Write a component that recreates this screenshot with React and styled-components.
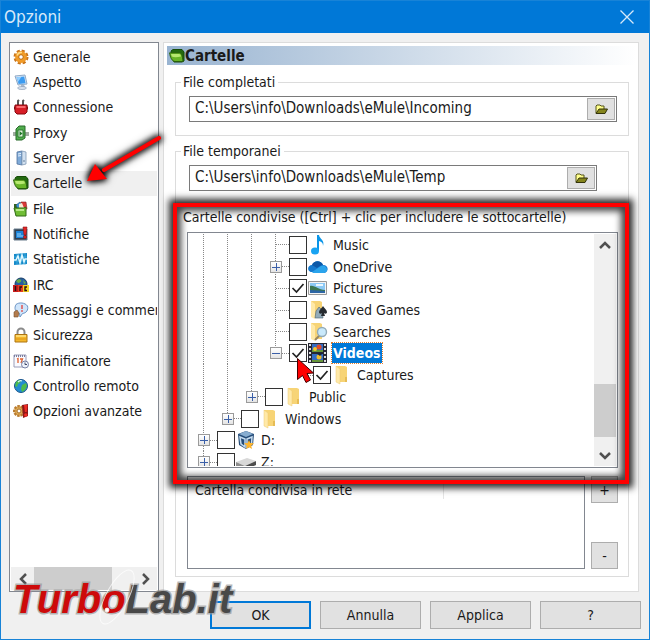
import React, { useState } from 'react';
import styled, { createGlobalStyle, css } from 'styled-components';

const GlobalStyle = createGlobalStyle`
*{
  box-sizing: border-box;
}
body{
  margin: 0;
}
body, button, input{
  font-family: 'DejaVu Sans Condensed', 'Noto Sans', sans-serif;
  font-size: 14px;
  color: #1a1a1a;
}
`;

const Window = styled.div`
  position: relative;
  display: flex;
  flex-direction: column;
  min-height: 100vh;
  background: #f0f0f0;
  border: 1px solid #1883d7;
  overflow: hidden;
`;
const TitleBar = styled.header`
  display: flex;
  align-items: center;
  justify-content: space-between;
  height: 32px;
  padding: 0 8px 0 3px;
  background: #0078d7;
  h1{
    margin: 0;
    font-size: 17px;
    font-weight: 400;
    color: #d6e9f9;
  }
`;
const CloseButton = styled.button`
  display: flex;
  padding: 7px;
  border: none;
  background: none;
`;
const Content = styled.div`
  display: flex;
  flex: 1;
  gap: 4px;
  padding: 9px 10px 9px 8px;
`;
const Sidebar = styled.nav`
  display: flex;
  flex-direction: column;
  flex: 0 0 150px;
  min-width: 0;
  padding: 1px;
  background: white;
  border: 1px solid #828790;
`;
const SectionList = styled.ul`
  display: grid;
  grid-auto-rows: 1fr;
  height: 380px;
  margin: 0;
  padding: 0;
  list-style: none;
  li{
    display: flex;
    min-width: 0;
    overflow: hidden;
  }
`;
const SectionButton = styled.button`
  display: flex;
  flex: 1 0 auto;
  align-items: center;
  gap: 4px;
  padding: 0 0 0 2px;
  border: none;
  white-space: nowrap;
  background: ${props => (props.$active ? '#f0f0f0' : 'none')};
`;
const SmallIcon = styled.svg`
  flex: none;
  width: 16px;
  height: 16px;
`;

const ScrollTrack = styled.div`
  display: flex;
  flex: none;
  background: #f0f0f0;
  ${props => (props.$vertical ? css`
    flex-direction: column;
    width: 22px;
  ` : css`
    height: 23px;
    margin-top: auto;
  `)}
`;
const ScrollButton = styled.button`
  display: flex;
  flex: 0 0 23px;
  align-items: center;
  justify-content: center;
  padding: 0;
  border: none;
  background: none;
`;
const Thumb = styled.div`
  background: #cdcdcd;
  flex: 0 0 ${props => props.$length}px;
`;
const Spacer = styled.div`
  flex: ${props => (props.$length ? `0 0 ${props.$length}px` : 1)};
`;

const Panel = styled.main`
  flex: 1;
  min-width: 0;
  padding: 3px 2px 14px 3px;
  background: white;
  border: 1px solid #dcdcdc;
`;
const PanelTitle = styled.h2`
  display: flex;
  align-items: center;
  height: 19px;
  margin: 0 0 8px;
  padding-left: 2px;
  font-size: 15px;
  font-weight: 700;
  background: linear-gradient(to right, #99b4d1, #ffffff);
`;
const Groups = styled.div`
  display: flex;
  flex-direction: column;
  padding: 0 7px 0 8px;
`;
const Group = styled.fieldset`
  min-width: 0;
  margin: 0 0 ${props => props.$after || 0}px;
  padding: 5px 11px 13px 13px;
  border: 1px solid #dcdcdc;
  legend{
    height: 18px;
    margin-left: -8px;
    padding: 0 3px 0 2px;
    line-height: 18px;
    white-space: nowrap;
  }
`;
const SharedWrap = styled.div`
  position: relative;
`;
const SharedGroup = styled(Group)`
  padding: 6px 10px 7px 11px;
  border-top-color: transparent;
  legend{
    margin-left: -6px;
  }
`;
const PathField = styled.div`
  display: flex;
  height: 26px;
  margin-right: ${props => props.$inset || 0}px;
  padding: 1px;
  border: 1px solid #7a7a7a;
  input{
    flex: 1;
    min-width: 0;
    padding: 0 0 2px 4px;
    border: none;
    outline: none;
    font-size: 15px;
    background: none;
  }
`;
const PushButton = styled.button`
  display: flex;
  flex: none;
  align-items: center;
  justify-content: center;
  width: ${props => props.$width || 28}px;
  height: ${props => props.$height || 22}px;
  padding: 0;
  background: #e1e1e1;
  border: ${props => (props.$primary ? '2px solid #0078d7' : '1px solid #adadad')};
`;

const Tree = styled.div`
  display: flex;
  height: 236px;
  padding: 1px;
  border: 1px solid #828790;
`;
const TreeRows = styled.ul`
  display: grid;
  flex: 1;
  grid-template-rows: repeat(11, 1fr);
  height: 239px;
  margin: 0;
  padding: 0 0 0 4px;
  list-style: none;
`;
const TreeClip = styled.div`
  display: flex;
  flex: 1;
  align-items: flex-start;
  overflow: hidden;
`;
const TreeRow = styled.li`
  display: flex;
  align-items: center;
  min-height: 0;
`;
const Guide = styled.span`
  display: grid;
  align-self: stretch;
  flex: none;
  width: 24px;
  background-image:
    ${props => (props.$line ? 'repeating-linear-gradient(to bottom, #888 0 1px, transparent 1px 2px)' : 'none')},
    ${props => (props.$branch ? 'repeating-linear-gradient(to right, #888 0 1px, transparent 1px 2px)' : 'none')};
  background-repeat: no-repeat;
  background-position: 10px 0, 11px 50%;
  background-size: 1px ${props => (props.$line === 'half' ? '50%' : '100%')}, 13px 1px;
`;
const Expander = styled.button`
  display: flex;
  align-self: center;
  width: 12px;
  height: 12px;
  margin-left: 5px;
  padding: 0;
  background: linear-gradient(#fff, #e4e4e4);
  border: 1px solid #9a9a9a;
`;
const TickBox = styled.span`
  display: grid;
  flex: none;
  width: 18px;
  height: 18px;
  input, svg{
    grid-area: 1 / 1;
    width: 18px;
    height: 18px;
    margin: 0;
  }
  input{
    appearance: none;
    background: white;
    border: 1px solid #333;
  }
  svg{
    visibility: hidden;
    pointer-events: none;
  }
  input:checked + svg{
    visibility: visible;
  }
`;
const RowLabel = styled.label`
  display: flex;
  align-items: center;
  gap: 4px;
  padding-left: 1px;
  line-height: 20px;
  white-space: nowrap;
  svg{
    flex: none;
    width: 20px;
    height: 20px;
  }
  span{
    padding: 0 1px;
    ${props => props.$selected && css`
      color: white;
      font-weight: 700;
      background: #0078d7;
      outline: 1px dotted #e08030;
    `}
  }
`;

const NetworkShares = styled.div`
  display: flex;
  gap: 6px;
  height: 93px;
  margin-top: 8px;
`;
const ShareTable = styled.div`
  flex: 1;
  padding-top: 5px;
  border: 1px solid #828790;
  table{
    width: 100%;
    border-collapse: collapse;
    table-layout: fixed;
  }
  th{
    height: 17px;
    padding: 0 7px;
    font-weight: 400;
    line-height: 17px;
    text-align: left;
  }
  th:first-child{
    width: 255px;
    border-right: 1px solid #e5e5e5;
  }
`;
const ShareButtons = styled.div`
  display: flex;
  flex-direction: column;
  justify-content: space-between;
`;
const Footer = styled.footer`
  display: flex;
  justify-content: flex-end;
  gap: 9px;
  padding: 0 8px 10px;
`;

const Highlight = styled.div`
  position: absolute;
  top: -5px;
  right: 0;
  left: -2px;
  height: 281px;
  border: 4px solid #ff0000;
  box-shadow: 0 0 7px 4px rgba(0, 0, 0, .85), inset 0 0 7px 4px rgba(0, 0, 0, .75);
  pointer-events: none;
`;
const Arrow = styled.svg`
  position: absolute;
  top: 119px;
  left: 69px;
  width: 110px;
  height: 90px;
  pointer-events: none;
  filter: drop-shadow(0 0 3px #000) drop-shadow(0 0 3px #000);
`;
const Cursor = styled.svg`
  position: absolute;
  top: 356px;
  left: 295px;
  width: 20px;
  height: 28px;
  pointer-events: none;
`;
const Watermark = styled.div`
  position: absolute;
  bottom: 15px;
  left: 12px;
  font-family: 'Liberation Sans', sans-serif;
  font-size: 40px;
  font-style: italic;
  font-weight: 700;
  line-height: 50px;
  color: #484848;
  paint-order: stroke fill;
  -webkit-text-stroke: 3px rgba(150, 150, 150, .7);
  pointer-events: none;
  span{
    color: #cd0a0a;
  }
`;
const Swirl = styled.svg`
  position: absolute;
  bottom: 10px;
  left: 84px;
  width: 60px;
  height: 62px;
  pointer-events: none;
`;

const icons = {
  gear: (
    <>
      <circle cx="8" cy="8" r="6" fill="none" stroke="#c9741a" strokeWidth="3" strokeDasharray="2.9 1.8" />
      <circle cx="8" cy="8" r="4.6" fill="#f7a62c" stroke="#f09a28" strokeWidth="2.600" />
      <path d="M4 6.5A4.5 4.5 0 0 1 9 3.6" fill="none" stroke="#ffdc86" strokeWidth="1.3" />
      <circle cx="8" cy="8" r="2.3" fill="#fff" stroke="#b8650c" />
    </>
  ),
  monitor: (
    <>
      <path d="M2 2l10-1 2 9-9 1z" fill="#dce8f5" stroke="#8fa9c6" />
      <path d="M3.5 3.2l7.7-.8 1.4 6.8-7 .8z" fill="#3c9bf0" />
      <path d="M3.5 3.2l5-.5-3.4 5z" fill="#95d0ff" />
      <path d="M8 11l3-.5 1 3H8z" fill="#a9b9cc" />
      <ellipse cx="9" cy="14" rx="4.4" ry="1.5" fill="#d9e2ee" stroke="#8b9db4" strokeWidth=".7" />
    </>
  ),
  plug: (
    <>
      <path d="M5 6V2l1-1M10 6V2l1-1" fill="none" stroke="#555" strokeWidth="2" />
      <path d="M1 9h14" stroke="#7d1116" strokeWidth="3" />
      <path d="M2 6h12v7l-2 2H4l-2-2z" fill="#d71e27" stroke="#86090f" />
      <path d="M3.5 8h9" stroke="#ff7c80" strokeWidth="1.6" />
    </>
  ),
  proxy: (
    <>
      <path d="M0 8h16M0 10h16" stroke="#465a48" strokeWidth="1.2" />
      <path d="M3 4l3-3h6v12l-3 2H3z" fill="#51ad4d" stroke="#286a2b" />
      <path d="M5 5h5v7H5z" fill="#e3f5df" stroke="#2c7731" />
      <path d="M6.5 6v5L9.5 8.500z" fill="#20762a" />
    </>
  ),
  server: (
    <>
      <path d="M4 2l5-1v14l-5-1z" fill="#7faad8" stroke="#50719d" strokeWidth=".8" />
      <path d="M9 1l4 1v12l-4 1z" fill="#d3e1f0" stroke="#8199b5" strokeWidth=".8" />
      <path d="M5 4l3-.5M5 6l3-.4" stroke="#e9f4ff" />
      <circle cx="11" cy="11" r=".8" fill="#54718e" />
    </>
  ),
  folder: (
    <>
      <path d="M2 3l2-1.500h9L15 4v9l-2 1H5z" fill="#236a10" stroke="#164c08" />
      <path d="M.6 4.800h9.800c2 .2 3 2 3.600 8.700H6C3 13.300 1.200 9.500.6 4.800z" fill="#68b526" stroke="#285f0c" />
      <path d="M2 6h8c1.200.2 1.800 1.200 2 2.500C8 9.500 4.500 9.500 2.800 8.500z" fill="#b7e870" />
    </>
  ),
  files: (
    <>
      <path d="M1 3h5l1 2v4H1z" fill="#356420" />
      <path d="M3 4l4-3 3 5-5 3z" fill="#3e91d3" stroke="#2c5270" strokeWidth=".6" />
      <path d="M8 1h5l1 7H9z" fill="#da3838" stroke="#842222" strokeWidth=".6" />
      <path d="M6 3l3-1 2 5H6z" fill="#f7ead2" />
      <path d="M1 7h10l2-1v9H3z" fill="#70bd35" stroke="#306a16" />
      <path d="M3 9h8" stroke="#b7e98a" strokeWidth="2" />
    </>
  ),
  notice: (
    <>
      <path d="M1 3h13v11H1z" fill="#2f4053" stroke="#6b7d8c" />
      <path d="M3 5h9v7H3z" fill="#1c83d8" />
      <path d="M4 8h4M4 10h6" stroke="#9ed8ff" />
      <path d="M10 1h4l-1 8h-2z" fill="#e42626" stroke="#861212" strokeWidth=".6" />
      <circle cx="12" cy="11" r="1.5" fill="#e42626" stroke="#861212" strokeWidth=".6" />
    </>
  ),
  stats: (
    <>
      <path d="M1 3l13-1v11L1 14z" fill="#1689c9" />
      <path d="M4 3v11M8 2v12M12 2v12M1 6h13M1 10h13" stroke="#55bce8" strokeWidth=".6" />
      <path d="M1 9h2l2-4 2 7 2-8 2 7 1-3h2" fill="none" stroke="#e1f9ff" strokeWidth="1.5" />
    </>
  ),
  irc: (
    <>
      <circle cx="8" cy="7" r="6" fill="#265f9f" stroke="#173c66" />
      <path d="M3 4c2-2 4-2 5-1s-1 3-3 3zM10 3l3 3-2 1z" fill="#69ad48" />
      <path d="M0 8h5v7H0z" fill="#c81c1c" />
      <path d="M5 8h5v7H5z" fill="#e43c22" />
      <path d="M10 8h6v7h-6z" fill="#f4d422" />
      <path d="M2.500 9v5M7 14v-4h2M14 10h-2v3.500h2" fill="none" stroke="#2b1010" strokeWidth="1.400" />
    </>
  ),
  messages: (
    <>
      <path d="M3 2.500C6 0 12 .5 14.500 4c1 4-1 7-5 7.500L7 15l-.5-3.500C2 10 1 6 3 2.500z" fill="#cfe5fb" stroke="#6b94c5" />
      <path d="M9 3v4" stroke="#e05c5c" strokeWidth="1.600" />
      <circle cx="9" cy="9" r="1" fill="#e05c5c" />
      <path d="M1 10l3-2 2 3-1 4H1z" fill="#b27b4d" stroke="#76502f" strokeWidth=".6" />
    </>
  ),
  lock: (
    <>
      <path d="M4.500 8V5a3.500 3.500 0 0 1 7 0v3" fill="none" stroke="#8b8b8b" strokeWidth="2" />
      <path d="M2 7.500h12V15H2z" fill="#f5b82a" stroke="#ad7412" />
      <path d="M3 9h10" stroke="#ffe386" strokeWidth="1.500" />
      <path d="M3 12h10" stroke="#dd951a" />
    </>
  ),
  calendar: (
    <>
      <path d="M1 2h12v12H1z" fill="#fafaff" stroke="#9a9db8" />
      <path d="M1 3h12" stroke="#7c7f9e" strokeWidth="2" strokeDasharray="1 1" />
      <path d="M4 6l1-.5V10M7 6h2.500L8 10" fill="none" stroke="#e0602c" strokeWidth="1.300" />
      <circle cx="12" cy="11.500" r="3.500" fill="#edf2fc" stroke="#7780a4" />
      <path d="M12 9.500v2h2" fill="none" stroke="#404766" />
    </>
  ),
  globe: (
    <>
      <circle cx="8" cy="8" r="6.500" fill="#238dd0" stroke="#17538b" />
      <path d="M3 4c2-2 4-2.500 5-1.500L7 5 5 6 4 9 2 8zM9 7l4-2 1 3-2 4-3 2-1-3z" fill="#4dbc4b" />
      <path d="M5 4c1-1 3-1.500 4-1" fill="none" stroke="#d7f5ff" strokeWidth="1.300" />
    </>
  ),
  advanced: (
    <>
      <circle cx="6" cy="8" r="4.800" fill="#dfaa55" stroke="#b97c30" strokeWidth="2.400" strokeDasharray="2.400 1" />
      <circle cx="6" cy="8" r="2" fill="#fff" stroke="#a56c22" />
      <path d="M9 2l6-1v12l-5 2z" fill="#8c1717" />
      <path d="M11 2h3.500l-.8 7h-1.800z" fill="#f02b24" />
      <circle cx="12.800" cy="12" r="1.700" fill="#f02b24" />
    </>
  ),
};

const treeIcons = {
  music: (
    <>
      <path d="M9 0h2c.5 4 6 5 4 11 0-3-1-4-4-5v10H9z" fill="#0a95e8" />
      <ellipse cx="7" cy="16" rx="4" ry="3.500" fill="#18a3f2" />
    </>
  ),
  cloud: (
    <>
      <path d="M6 15C-2 16-1 8 4 8c2-5 9-5 11 0 6 0 6 7 1 8z" fill="#1479cf" />
      <path d="M4 8c2-5 9-5 11 0-3 0-4 2-6 3z" fill="#0c59a8" />
      <path d="M4 15l9-6c5-3 9 6 3 7H5z" fill="#2ba4ec" />
    </>
  ),
  picture: (
    <>
      <path d="M.5 3.500h18v13H.5z" fill="#f4f4f4" stroke="#999" />
      <path d="M2 5h15v10H2z" fill="#8cc9f5" />
      <path d="M2 8c5-1 8 4 15 4v3H2z" fill="#3c7650" />
      <path d="M2 12c6 0 10 1 15 1v2H2z" fill="#2d66a5" />
      <path d="M8 7h7" stroke="#eaf7ff" strokeWidth="2" />
    </>
  ),
  folder: (
    <>
      <path d="M4 1h9l2 1v15H4z" fill="#f7d476" />
      <path d="M4 1l4 3v15l-4-2z" fill="#ffe9a8" stroke="#edca70" strokeWidth=".5" />
      <path d="M13 12h2v5h-2z" fill="#e6bc55" />
    </>
  ),
  games: (
    <>
      <path d="M3 1h9l2 1v15H3z" fill="#f7d476" />
      <path d="M3 1l4 3v15l-4-2z" fill="#ffe9a8" />
      <path d="M7 18l1-7 3-4 3 3 1 8z" fill="#92abb9" stroke="#4c626e" strokeWidth=".6" />
      <path d="M15 6c1 2 4 4 4 6s-2 2-3 1l1 3h-4l1-3c-1 1-3 1-3-1s3-4 4-6z" fill="#272b30" />
    </>
  ),
  search: (
    <>
      <path d="M3 1h9l2 1v15H3z" fill="#f7d476" />
      <path d="M3 1l4 3v15l-4-2z" fill="#ffe9a8" />
      <path d="M12 13l-5 5" stroke="#9a8762" strokeWidth="2" />
      <circle cx="14" cy="10" r="4.500" fill="#c9e9fb" stroke="#93abb8" strokeWidth="1.400" />
    </>
  ),
  film: (
    <>
      <path d="M0 0h19v20H0z" fill="#272732" />
      <path d="M4 1h11v8H4zM4 11h11v8H4z" fill="#336bc3" />
      <path d="M2 1v19M17 1v19" stroke="#ddd" strokeWidth="2" strokeDasharray="2 2" />
      <path d="M4 7h11v2H4zM4 17h11v2H4z" fill="#66953a" />
      <circle cx="11" cy="4" r="2.500" fill="#e24a26" />
      <circle cx="7" cy="6" r="2" fill="#f6c52b" />
      <circle cx="11" cy="14" r="2.500" fill="#f0bd2d" />
      <path d="M8 10h7l-3 3z" fill="#1a2435" />
    </>
  ),
  box: (
    <>
      <path d="M2 4l8-3 8 3-1 11-7 4-7-4z" fill="#254c78" />
      <path d="M3 4l7-3 7 3-7 3z" fill="#87add0" />
      <path d="M4 7l5 2v8l-4-3zM11 9l5-2-.5 7-4.500 3z" fill="none" stroke="#c5dcf0" strokeWidth="1.500" />
      <path d="M13 10l1.300 3 3.700.3-2.800 2.400.9 3.300-3.100-1.800L10 19l.8-3.300L8 13.300l3.700-.3z" fill="#ffb52b" />
    </>
  ),
  drive: (
    <>
      <path d="M0 10l11-4 9 3-11 5z" fill="#d8d8d8" />
      <path d="M0 10l9 4v4l-9-4z" fill="#8d8d8d" />
      <path d="M9 14l11-5v4L9 18z" fill="#4d4d4d" />
    </>
  ),
};

const sections = [
  { name: 'Generale', icon: 'gear' },
  { name: 'Aspetto', icon: 'monitor' },
  { name: 'Connessione', icon: 'plug' },
  { name: 'Proxy', icon: 'proxy' },
  { name: 'Server', icon: 'server' },
  { name: 'Cartelle', icon: 'folder' },
  { name: 'File', icon: 'files' },
  { name: 'Notifiche', icon: 'notice' },
  { name: 'Statistiche', icon: 'stats' },
  { name: 'IRC', icon: 'irc' },
  { name: 'Messaggi e commenti', icon: 'messages' },
  { name: 'Sicurezza', icon: 'lock' },
  { name: 'Pianificatore', icon: 'calendar' },
  { name: 'Controllo remoto', icon: 'globe' },
  { name: 'Opzioni avanzate', icon: 'advanced' },
];

// guides: one entry per level, the last one belongs to the row itself
const folders = [
  { name: 'Music', icon: 'music', guides: ['full', 'full', 'full', 'full'] },
  { name: 'OneDrive', icon: 'cloud', guides: ['full', 'full', 'full', 'full'], expander: 'plus' },
  { name: 'Pictures', icon: 'picture', guides: ['full', 'full', 'full', 'full'], shared: true },
  { name: 'Saved Games', icon: 'games', guides: ['full', 'full', 'full', 'full'] },
  { name: 'Searches', icon: 'search', guides: ['full', 'full', 'full', 'full'] },
  { name: 'Videos', icon: 'film', guides: ['full', 'full', 'full', 'half'], expander: 'minus', shared: true, selected: true },
  { name: 'Captures', icon: 'folder', guides: ['full', 'full', 'full', '', 'half'], shared: true },
  { name: 'Public', icon: 'folder', guides: ['full', 'full', 'half'], expander: 'plus' },
  { name: 'Windows', icon: 'folder', guides: ['full', 'half'], expander: 'plus' },
  { name: 'D:', icon: 'box', guides: ['full'], expander: 'plus' },
  { name: 'Z:', icon: 'drive', guides: ['full'], expander: 'plus' },
];

const Chevron = ({ d }) => (
  <svg width="12" height="12" viewBox="0 0 12 12" fill="none" stroke="#505050" strokeWidth="2.500">
    <path d={d} />
  </svg>
);

const OpenFolder = () => (
  <svg width="13" height="11" viewBox="0 0 13 11">
    <path d="M1 9V2l1-1h3l1 1h3v3" fill="#ffff8c" stroke="#55551b" />
    <path d="M1 9.500L4 5h8.500L10 9.500z" fill="#85851c" stroke="#33330a" />
  </svg>
);

const FolderRow = ({ data }) => {
  const [shared, setShared] = useState(!!data.shared);
  const id = `folder-${data.name.replace(/\W/g, '')}`;
  return (
    <TreeRow>
      {data.guides.map((line, level) => {
        const own = level === data.guides.length - 1;
        return (
          <Guide key={level} $line={line} $branch={own}>
            {own && data.expander && (
              <Expander aria-label={data.name}>
                <svg width="10" height="10" viewBox="0 0 10 10" stroke="#3a5fa8" strokeWidth="1">
                  <path d={data.expander === 'plus' ? 'M1 5.500h8M5.500 1v8' : 'M1 5.500h8'} />
                </svg>
              </Expander>
            )}
          </Guide>
        );
      })}
      <TickBox>
        <input id={id} type="checkbox" checked={shared} onChange={e => setShared(e.target.checked)} />
        <svg viewBox="0 0 18 18"><path d="M3.500 9l4 4 7-8" fill="none" stroke="#222" strokeWidth="1.700" /></svg>
      </TickBox>
      <RowLabel htmlFor={id} $selected={data.selected}>
        <svg viewBox="0 0 20 20">{treeIcons[data.icon]}</svg>
        <span>{data.name}</span>
      </RowLabel>
    </TreeRow>
  );
};

const PathGroup = ({ title, path, inset, after }) => (
  <Group $after={after}>
    <legend>{title}</legend>
    <PathField $inset={inset}>
      <input type="text" aria-label={title} defaultValue={path} />
      <PushButton aria-label="Sfoglia"><OpenFolder /></PushButton>
    </PathField>
  </Group>
);

const App = () => {
  const [active, setActive] = useState('Cartelle');
  return (
    <Window>
      <GlobalStyle />
      <TitleBar>
        <h1>Opzioni</h1>
        <CloseButton aria-label="Chiudi">
          <svg width="14" height="14" viewBox="0 0 14 14" stroke="#d6e9f9" strokeWidth="1.300">
            <path d="M.5.500l13 13M13.500.500l-13 13" />
          </svg>
        </CloseButton>
      </TitleBar>
      <Content>
        <Sidebar>
          <SectionList>
            {sections.map(({ name, icon }) => (
              <li key={name}>
                <SectionButton $active={name === active} onClick={() => setActive(name)}>
                  <SmallIcon viewBox="0 0 16 16">{icons[icon]}</SmallIcon>
                  {name}
                </SectionButton>
              </li>
            ))}
          </SectionList>
          <ScrollTrack>
            <ScrollButton aria-label="Sinistra"><Chevron d="M9 1L4 6l5 5" /></ScrollButton>
            <Thumb $length={78} />
            <Spacer />
            <ScrollButton aria-label="Destra"><Chevron d="M3 1l5 5-5 5" /></ScrollButton>
          </ScrollTrack>
        </Sidebar>
        <Panel>
          <PanelTitle>
            <SmallIcon viewBox="0 0 16 16">{icons.folder}</SmallIcon>
            Cartelle
          </PanelTitle>
          <Groups>
            <PathGroup title="File completati" path="C:\Users\info\Downloads\eMule\Incoming" after={6} />
            <PathGroup title="File temporanei" path="C:\Users\info\Downloads\eMule\Temp" inset={20} after={3} />
            <SharedWrap>
              <SharedGroup>
                <legend>Cartelle condivise ([Ctrl] + clic per includere le sottocartelle)</legend>
                <Tree>
                  <TreeClip>
                    <TreeRows>
                      {folders.map(folder => <FolderRow key={folder.name} data={folder} />)}
                    </TreeRows>
                  </TreeClip>
                  <ScrollTrack $vertical>
                    <ScrollButton aria-label="Su"><Chevron d="M1 8l5-5 5 5" /></ScrollButton>
                    <Spacer />
                    <Thumb $length={53} />
                    <Spacer $length={6} />
                    <ScrollButton aria-label="Giù"><Chevron d="M1 4l5 5 5-5" /></ScrollButton>
                  </ScrollTrack>
                </Tree>
                <NetworkShares>
                  <ShareTable>
                    <table>
                      <thead>
                        <tr>
                          <th scope="col">Cartella condivisa in rete</th>
                          <th aria-hidden="true" />
                        </tr>
                      </thead>
                    </table>
                  </ShareTable>
                  <ShareButtons>
                    <PushButton $width={27} $height={27}>+</PushButton>
                    <PushButton $width={27} $height={27}>-</PushButton>
                  </ShareButtons>
                </NetworkShares>
              </SharedGroup>
              <Highlight />
            </SharedWrap>
          </Groups>
        </Panel>
      </Content>
      <Footer>
        <PushButton $width={101} $height={28} $primary>OK</PushButton>
        <PushButton $width={101} $height={28}>Annulla</PushButton>
        <PushButton $width={101} $height={28}>Applica</PushButton>
        <PushButton $width={101} $height={28}>?</PushButton>
      </Footer>
      <Arrow viewBox="70 120 110 90">
        <path d="M159 138L104 170" stroke="#f00" strokeWidth="4" strokeLinecap="round" />
        <path d="M87 181l8-17 12 15z" fill="#f00" />
      </Arrow>
      <Cursor viewBox="0 0 20 28">
        <path d="M1.500 1.500v21l5-4 3.500 7 4.500-2.500-3.500-6.500 6.500-.5z" fill="#f00" stroke="#400" />
      </Cursor>
      <Watermark><span>Turbo</span>Lab.it</Watermark>
      <Swirl viewBox="0 0 60 62" fill="none" stroke="#fff" strokeOpacity=".7">
        <ellipse cx="32" cy="30" rx="11" ry="30" transform="rotate(28 32 30)" />
        <circle cx="22" cy="43" r="2" fill="#fff" />
      </Swirl>
    </Window>
  );
};

export default App;
